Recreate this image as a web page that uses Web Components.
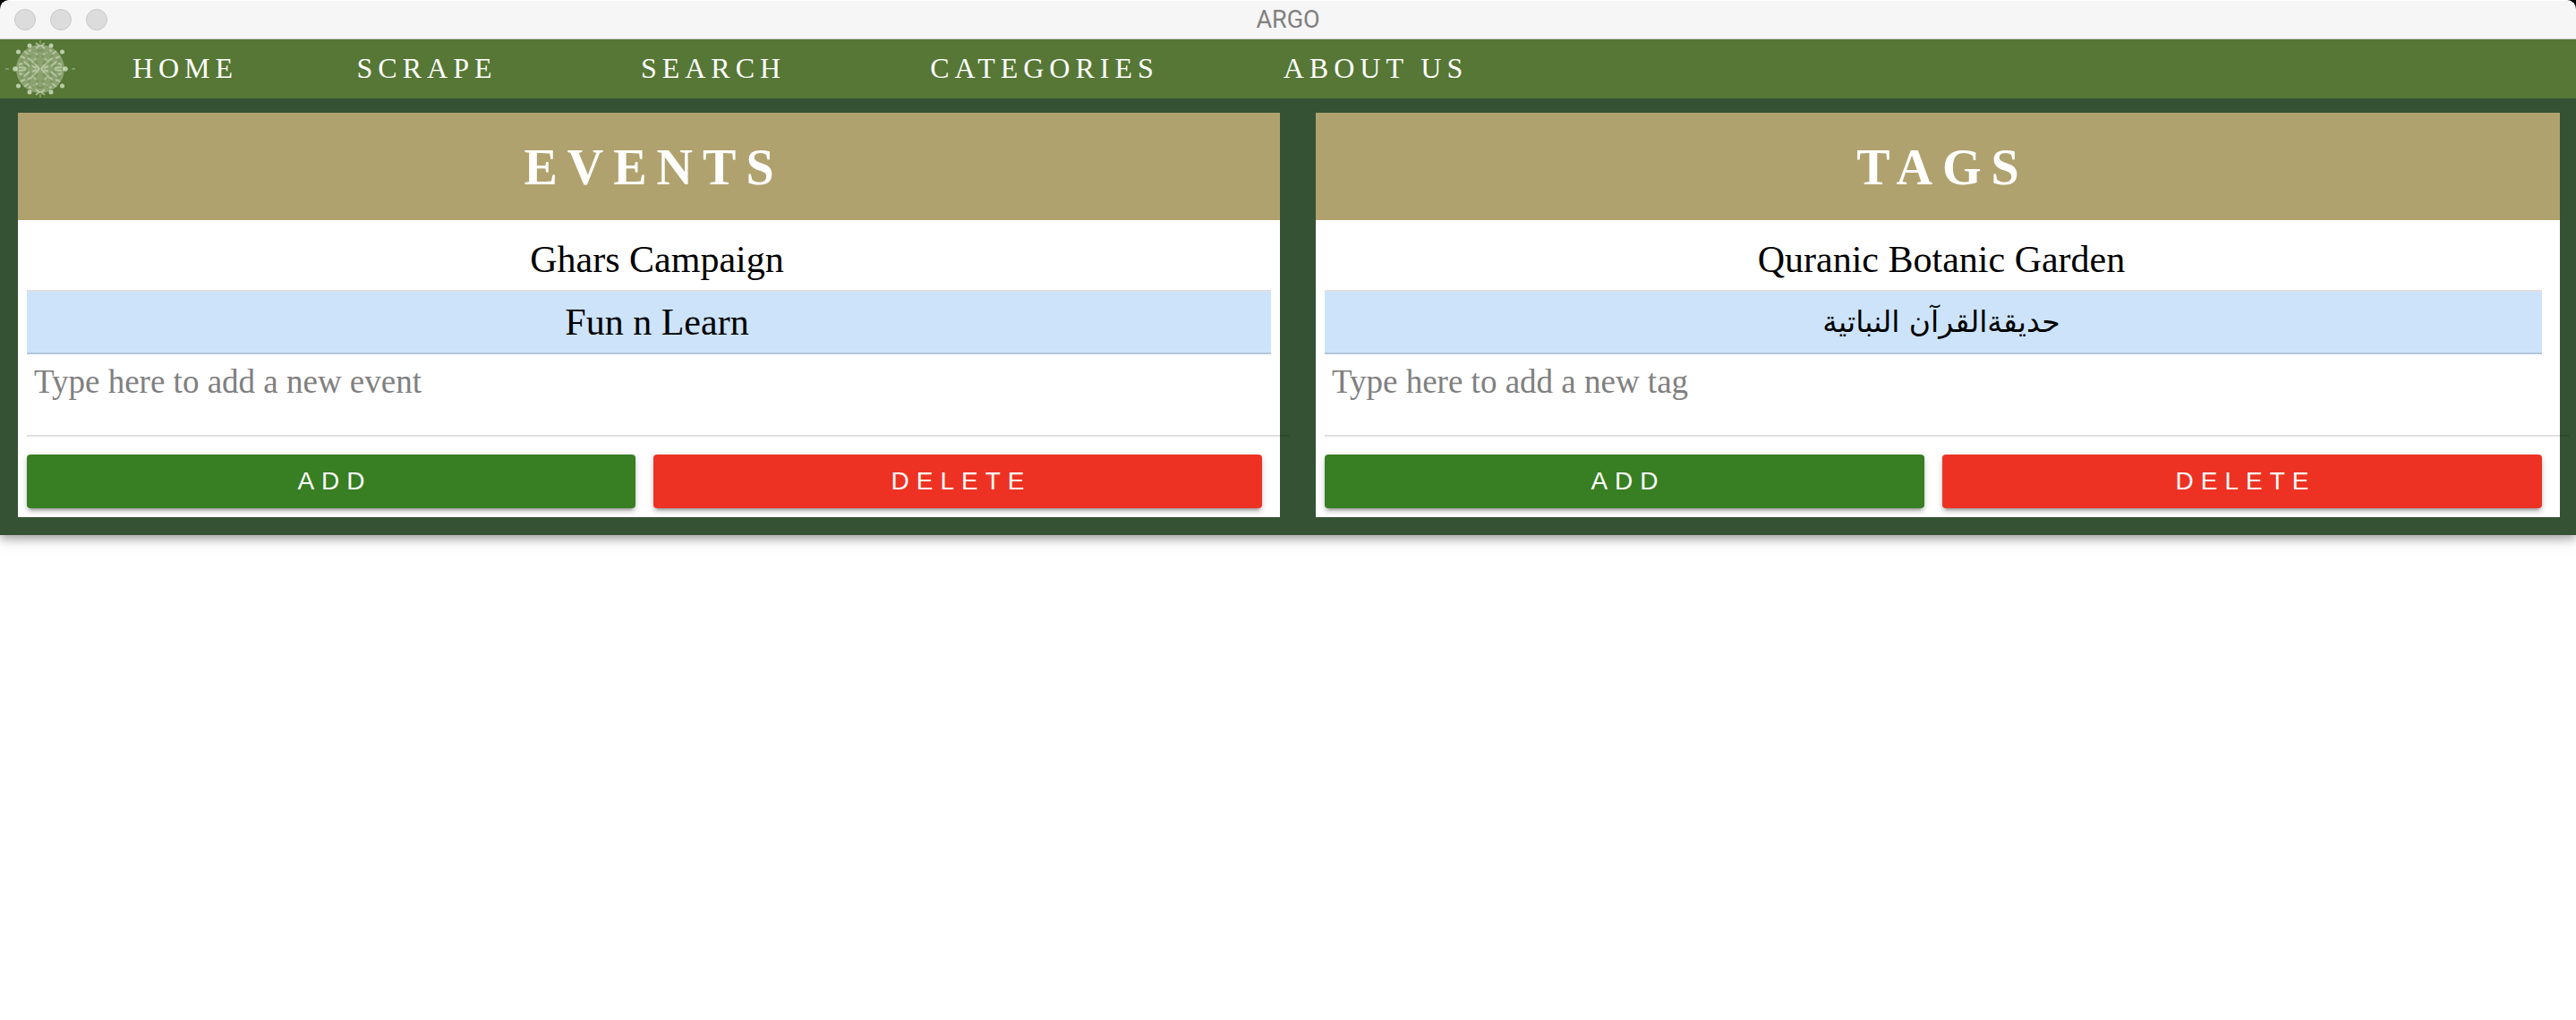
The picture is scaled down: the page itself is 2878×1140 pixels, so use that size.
<!DOCTYPE html>
<html lang="en">
<head>
<meta charset="utf-8">
<title>ARGO</title>
<style>
  body { margin: 0; min-height: 100vh; background: #fff; font-family: "Liberation Serif", "Times New Roman", serif; }
</style>
</head>
<body>
<argo-app></argo-app>

<script>
const define = (name, html, setup) => customElements.define(name, class extends HTMLElement {
  connectedCallback() {
    if (this.shadowRoot) return;
    this.attachShadow({ mode: 'open' }).innerHTML = html;
    if (setup) setup(this, this.shadowRoot);
  }
});

define('window-bar', `
  <style>
    :host { display: block; background: #000; }
    header {
      display: grid; grid-template-columns: 1fr auto 1fr; align-items: center;
      box-sizing: border-box; height: 44px; padding: 0 16px;
      background: #f6f6f6; border-top: 1px solid #fff; border-bottom: 1px solid #cbcbcb;
      border-radius: 10px 10px 0 0;
      font: 27px/42px Roboto, "Liberation Sans", sans-serif; color: #808080;
    }
    .lights { display: flex; gap: 16px; }
    .lights i { box-sizing: border-box; width: 24px; height: 24px; border-radius: 50%; background: #dcdcdc; border: 1px solid #c9c9c9; }
  </style>
  <header><div class="lights"><i></i><i></i><i></i></div><span><slot></slot></span></header>
`);

define('argo-logo', `
  <style>
    :host { display: block; }
    svg { display: block; width: 90px; height: 66px; }
  </style>
  <svg viewBox="-45 -33 90 66" fill="none" stroke="#dfe8d2" aria-hidden="true">
    <circle r="27" fill="#c9d8b8" fill-opacity=".45" stroke="none"/>
    <g class="rays"></g>
    <g fill="#dfe8d2" stroke="none" fill-opacity=".75">
      <circle cx="-28" r="2.800"/><circle cx="28" r="2.800"/>
      <circle cx="-24.500" cy="-19" r="2.500"/><circle cx="24.500" cy="-19" r="2.500"/>
      <circle cx="-24.500" cy="19" r="2.500"/><circle cx="24.500" cy="19" r="2.500"/>
      <circle cx="-12" cy="-26" r="2.500"/><circle cx="12" cy="-26" r="2.500"/>
      <circle cx="-12" cy="26" r="2.500"/><circle cx="12" cy="26" r="2.500"/>
    </g>
    <g stroke-opacity=".3" stroke-width="2">
      <path d="M-39 0h4M35 0h4M0-32v4M0 28v4"/>
      <path stroke-opacity=".55" d="M-5-29l4 3-4 3M5-29l-4 3 4 3M-5 29l4-3-4-3M5 29l-4-3 4-3"/>
    </g>
  </svg>
`, (host, root) => {
  const rays = root.querySelector('.rays');
  const quarter = `
    <path stroke-opacity=".5" stroke-width="2" d="M1 0l6-7M9-9l5-3M4-1l5-2M16-1l8-1M12-3l7-6M5-12l4 5M3-16l5-3M13-16l5-4M17-12l5-2M20-6l4 1M10-21l3 1"/>
    <path stroke="#587837" stroke-opacity=".3" stroke-width="2" d="M3-5l2-4M10-5l3-3M14-2l4-2M7-10l-2 5M5-17l3-3M11-13l3-3M18-8l4-2M2-13l2-2M0-21l4 1"/>`;
  rays.innerHTML = ['1 1', '-1 1', '1 -1', '-1 -1'].map(s => `<g transform="scale(${s})">${quarter}</g>`).join('');
});

define('nav-bar', `
  <style>
    :host { display: block; position: relative; z-index: 1; background: #567735; }
    nav { display: flex; height: 66px; }
    argo-logo { flex: 0 0 72px; min-width: 0; }
    .links { display: grid; grid-template-columns: 270px 270px 370px 370px 370px; }
    ::slotted(a) { text-align: center; font-size: 32px; line-height: 64px; letter-spacing: 6px; color: #fff; text-decoration: none; }
  </style>
  <nav><argo-logo></argo-logo><div class="links"><slot></slot></div></nav>
`);

define('action-button', `
  <style>
    :host { display: block; flex: 1; }
    button {
      display: block; width: 100%; height: 60px; padding: 0; border: 0; border-radius: 4px;
      background: var(--fill); color: #fff;
      font: 28px/60px "Liberation Sans", Arial, sans-serif; letter-spacing: 8px; text-indent: 8px; text-align: center;
      box-shadow: 0 4px 4px rgba(0,0,0,.14), 0 2px 10px rgba(0,0,0,.12), 0 6px 2px -4px rgba(0,0,0,.2);
    }
  </style>
  <button type="button"><slot></slot></button>
`);

define('list-item', `
  <style>
    :host { display: block; padding-left: 18px; font-size: 42px; line-height: 68px; text-align: center; color: #000; border-bottom: 2px solid #e0e0e0; }
    :host([selected]) { background: #cde3fa; border-color: #b3c7dd; }
    :host([lang="ar"]) { font-family: "DejaVu Sans", "Noto Sans", sans-serif; font-size: 33px; }
  </style>
  <slot></slot>
`);

define('item-panel', `
  <style>
    :host { display: block; background: #fff; }
    h2 { margin: 0; padding-top: 2px; background: #b0a26e; color: #fff; font-size: 56px; line-height: 118px; font-weight: bold; letter-spacing: 11px; text-indent: 11px; text-align: center; }
    .list { padding: 10px var(--list-end, 10px) 0 10px; }
    .entry { margin: 0 -10px 0 10px; }
    textarea {
      display: block; box-sizing: border-box; width: 100%; height: 92px; margin: 0; padding: 10px 8px;
      border: 0; border-bottom: 2px solid rgba(0,0,0,.12); border-radius: 0; outline: 0; resize: none; overflow: hidden;
      background: transparent; color: #000; font: 37px/41px "Liberation Serif", "Times New Roman", serif;
    }
    textarea::placeholder { color: #808080; opacity: 1; }
    .actions { display: flex; gap: 20px; padding: 20px 20px 10px 10px; }
  </style>
  <h2></h2>
  <div class="list" role="list"><slot></slot></div>
  <div class="entry"><textarea></textarea></div>
  <div class="actions">
    <action-button style="--fill:#387e22">ADD</action-button>
    <action-button style="--fill:#ed3224">DELETE</action-button>
  </div>
`, (host, root) => {
  root.querySelector('h2').textContent = host.getAttribute('heading');
  const box = root.querySelector('textarea');
  box.placeholder = host.getAttribute('prompt');
  box.setAttribute('aria-label', host.getAttribute('prompt'));
});

define('argo-app', `
  <style>
    :host { display: block; }
    main {
      display: grid; grid-template-columns: 141fr 139fr; gap: 40px; padding: 16px 18px 20px 20px;
      background: #355235; box-shadow: 0 4px 10px rgba(0,0,0,.3), 0 4px 20px rgba(0,0,0,.12);
    }
    .tags { --list-end: 20px; }
  </style>
  <window-bar>ARGO</window-bar>
  <nav-bar>
    <a href="#home">HOME</a><a href="#scrape">SCRAPE</a><a href="#search">SEARCH</a><a href="#categories">CATEGORIES</a><a href="#about">ABOUT US</a>
  </nav-bar>
  <main>
    <item-panel heading="EVENTS" prompt="Type here to add a new event">
      <list-item role="listitem">Ghars Campaign</list-item>
      <list-item role="listitem" selected>Fun n Learn</list-item>
    </item-panel>
    <item-panel class="tags" heading="TAGS" prompt="Type here to add a new tag">
      <list-item role="listitem">Quranic Botanic Garden</list-item>
      <list-item role="listitem" selected lang="ar">حديقةالقرآن النباتية</list-item>
    </item-panel>
  </main>
`);
</script>
</body>
</html>
